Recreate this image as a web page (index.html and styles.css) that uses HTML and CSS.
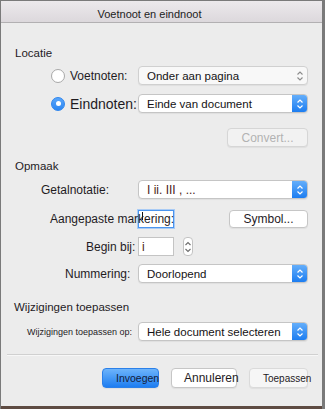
FILE: index.html
```html
<!DOCTYPE html>
<html>
<head>
  <title>Voetnoot en eindnoot</title>
  <link rel="stylesheet" href="styles.css">
</head>
<body>

  <div class="window">
    <div class="titlebar">Voetnoot en eindnoot</div>

    <div class="content">
      <div class="heading">Locatie</div>

      <div class="row r-voet">
        <div class="lbl lbl-radio"><span class="radio"></span>Voetnoten:</div>
        <div class="select inactive">
          Onder aan pagina
          <span class="arrow">
            <svg width="8" height="12" viewBox="0 0 8 12"><path d="M1.5 4.5 L4 2 L6.5 4.5 M1.5 7.5 L4 10 L6.5 7.5" fill="none" stroke="#8c8c8c" stroke-width="1.1"/></svg>
          </span>
        </div>
      </div>

      <div class="row r-eind">
        <div class="lbl lbl-radio big"><span class="radio on"></span>Eindnoten:</div>
        <div class="select">
          Einde van document
          <span class="arrow">
            <svg width="8" height="12" viewBox="0 0 8 12"><path d="M1.5 4.5 L4 2 L6.5 4.5 M1.5 7.5 L4 10 L6.5 7.5" fill="none" stroke="#fff" stroke-width="1.2"/></svg>
          </span>
        </div>
      </div>

      <div class="row r-convert">
        <button class="btn disabled w-convert">Convert...</button>
      </div>

      <div class="heading h-opmaak">Opmaak</div>

      <div class="row r-getal">
        <div class="lbl pad-getal">Getalnotatie:</div>
        <div class="select">
          <span class="roman">I ii. III , ...</span>
          <span class="arrow">
            <svg width="8" height="12" viewBox="0 0 8 12"><path d="M1.5 4.5 L4 2 L6.5 4.5 M1.5 7.5 L4 10 L6.5 7.5" fill="none" stroke="#fff" stroke-width="1.2"/></svg>
          </span>
        </div>
      </div>

      <div class="row r-aang">
        <div class="lbl pad-aang over">Aangepaste markering:</div>
        <div class="field focus"><span class="caret"></span></div>
        <button class="btn w-symbol">Symbol...</button>
      </div>

      <div class="row r-begin">
        <div class="lbl pad-begin">Begin bij:</div>
        <div class="field"><span class="roman">i</span></div>
        <span class="stepper">
          <svg width="8" height="14" viewBox="0 0 8 14"><path d="M1.5 5 L4 2.5 L6.5 5 M1.5 9 L4 11.5 L6.5 9" fill="none" stroke="#6d6d6d" stroke-width="1.1"/></svg>
        </span>
      </div>

      <div class="row r-numm">
        <div class="lbl pad-numm">Nummering:</div>
        <div class="select">
          Doorlopend
          <span class="arrow">
            <svg width="8" height="12" viewBox="0 0 8 12"><path d="M1.5 4.5 L4 2 L6.5 4.5 M1.5 7.5 L4 10 L6.5 7.5" fill="none" stroke="#fff" stroke-width="1.2"/></svg>
          </span>
        </div>
      </div>

      <div class="heading h-wijz">Wijzigingen toepassen</div>

      <div class="row r-wijz">
        <div class="lbl pad-wijz small">Wijzigingen toepassen op:</div>
        <div class="select">
          Hele document selecteren
          <span class="arrow">
            <svg width="8" height="12" viewBox="0 0 8 12"><path d="M1.5 4.5 L4 2 L6.5 4.5 M1.5 7.5 L4 10 L6.5 7.5" fill="none" stroke="#fff" stroke-width="1.2"/></svg>
          </span>
        </div>
      </div>

      <div class="separator"></div>

      <div class="actions">
        <button class="btn primary w-invoegen">Invoegen</button>
        <button class="btn w-annuleren">Annuleren</button>
        <button class="btn soft w-toepassen">Toepassen</button>
      </div>
    </div>
  </div>

</body>
</html>
```

FILE: styles.css
```css
body {
  margin: 0;
  background: #7a7a7a;
  font-family: 'Liberation Sans', Arial, sans-serif;
  color: #1f1b1f;
}
.window {
  margin: 1px 0 0 1px;
  width: 321px;
  height: 405px;
  background: #ececec;
  border-bottom: 3px solid #5e4b42;
}
.titlebar {
  height: 18px;
  padding: 3px 24px 0 0;
  border-bottom: 1px solid #b2b0b2;
  background: linear-gradient(#ece9ec, #dcd8dc);
  text-align: center;
  font-size: 11px;
  line-height: 20px;
  color: #222;
}
.content {
  padding-top: 23px;
}
.heading {
  padding-left: 14px;
  font-size: 11.5px;
  line-height: 14px;
}
.h-opmaak { margin-top: 12px; }
.h-wijz { margin-top: 17px; padding-left: 13px; }

.row {
  display: flex;
  align-items: center;
  height: 19px;
  width: 307px;
}
.r-voet { margin-top: 6px; }
.r-eind { margin-top: 9px; }
.r-convert { margin-top: 15px; justify-content: flex-end; }
.r-getal { margin-top: 7px; }
.r-aang { margin-top: 10px; }
.r-begin { margin-top: 9px; }
.r-numm { margin-top: 8px; }
.r-wijz { margin-top: 8px; }

.lbl {
  flex: none;
  width: 137px;
  box-sizing: border-box;
  white-space: nowrap;
  font-size: 12px;
}
.lbl-radio {
  display: flex;
  align-items: center;
  padding-left: 50px;
}
.lbl-radio.big { font-size: 14px; }
.pad-getal { padding-left: 40px; }
.pad-aang { padding-left: 49px; }
.pad-begin { padding-left: 85px; }
.pad-numm { padding-left: 64px; }
.pad-wijz { padding-left: 26px; }
.lbl.small { font-size: 9px; }
.lbl.over {
  position: relative;
  z-index: 1;
}

.radio {
  width: 14px;
  height: 14px;
  margin-right: 5px;
  box-sizing: border-box;
  border-radius: 50%;
  border: 1px solid #a8a8a8;
  background: #fff;
  display: flex;
  align-items: center;
  justify-content: center;
}
.radio.on {
  border-color: #2d85ee;
  background: linear-gradient(#5aa6fa, #2b86f2);
}
.radio.on::after {
  content: "";
  width: 5px;
  height: 5px;
  border-radius: 50%;
  background: #fff;
}

.select {
  flex: 1;
  height: 19px;
  box-sizing: border-box;
  display: flex;
  align-items: center;
  padding-left: 8px;
  border: 1px solid #c5c5c5;
  border-radius: 4px;
  background: #fff;
  box-shadow: 0 1px 1px rgba(0,0,0,0.06);
  font-size: 11.5px;
  color: #141214;
  overflow: hidden;
}
.select .arrow {
  margin-left: auto;
  width: 15px;
  align-self: stretch;
  display: flex;
  align-items: center;
  justify-content: center;
  background: linear-gradient(#64aefa, #1c7df1);
}
.select.inactive {
  background: #f8f8f8;
  border-color: #d0d0d0;
}
.select.inactive .arrow {
  background: none;
}
.roman {
  color: #4b2416;
  font-size: 12px;
}

.field {
  flex: none;
  width: 36px;
  height: 19px;
  box-sizing: border-box;
  display: flex;
  align-items: center;
  padding-left: 3px;
  border: 1px solid #c4c4c4;
  background: #fff;
}
.field.focus {
  height: 18px;
  border-color: #4b95ee;
  box-shadow: 0 0 0 1px #a9cbf5;
}
.caret {
  align-self: flex-start;
  margin-top: 1px;
  width: 1px;
  height: 8px;
  background: #111;
}
.stepper {
  flex: none;
  width: 10px;
  height: 19px;
  margin-left: 9px;
  box-sizing: border-box;
  display: flex;
  align-items: center;
  justify-content: center;
  border: 1px solid #c3c3c3;
  border-radius: 4px;
  background: #fff;
}

.btn {
  height: 19px;
  box-sizing: border-box;
  padding: 0;
  border: 1px solid #c6c6c6;
  border-radius: 4px;
  background: #fff;
  box-shadow: 0 1px 1px rgba(0,0,0,0.06);
  font-family: 'Liberation Sans', Arial, sans-serif;
  font-size: 12px;
  color: #1f1b1f;
  white-space: nowrap;
}
.btn.disabled {
  background: #f2f2f2;
  border-color: #d6d6d6;
  color: #b2b2b2;
}
.w-convert { width: 81px; }
.w-symbol { width: 79px; margin-left: auto; height: 18px; }

.separator {
  margin: 13px 0 0 6px;
  width: 311px;
  height: 0;
  border-top: 1px solid #d0d0d0;
  border-bottom: 1px solid #f7f7f7;
}
.actions {
  display: flex;
  width: 307px;
  justify-content: flex-end;
  gap: 12px;
  margin-top: 12px;
}
.actions .btn {
  height: 20px;
  text-align: left;
  overflow: visible;
}
.btn.primary {
  background: linear-gradient(#6db4fb, #1d7df1);
  border-color: #2b80e9;
  color: #14203a;
  font-size: 10.5px;
}
.btn.soft {
  background: #f6f6f6;
  border-color: #dadada;
  font-size: 10px;
}
.w-invoegen { width: 57px; padding-left: 13px; }
.w-annuleren { width: 66px; padding-left: 12px; }
.w-toepassen { width: 59px; padding-left: 13px; }
```
